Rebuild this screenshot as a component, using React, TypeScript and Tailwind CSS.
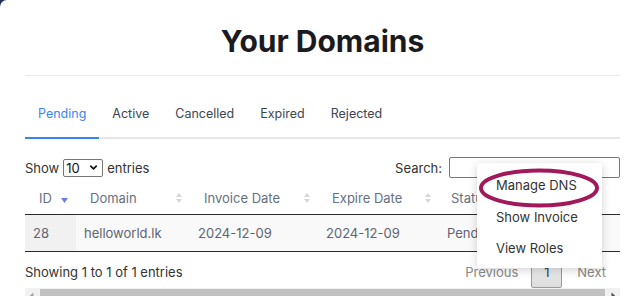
import { ChevronDown } from "lucide-react";

const TABS = ["Pending", "Active", "Cancelled", "Expired", "Rejected"];

const COLS = [
  { label: "ID", sort: "desc" },
  { label: "Domain", sort: "none" },
  { label: "Invoice Date", sort: "none" },
  { label: "Expire Date", sort: "none" },
  { label: "Status", sort: "none" },
];

const ROW = ["28", "helloworld.lk", "2024-12-09", "2024-12-09", "Pending"];

function SortIcon({ sort }: { sort: string }) {
  if (sort === "desc") {
    return (
      <svg width="7" height="5" viewBox="0 0 7 5" className="mt-[4px]">
        <path d="M0 0h7L3.5 5z" fill="#6f7be0" />
      </svg>
    );
  }
  return (
    <svg width="6" height="10" viewBox="0 0 6 10">
      <path d="M0 4L3 0l3 4z" fill="#d4d6da" />
      <path d="M0 6h6L3 10z" fill="#d4d6da" />
    </svg>
  );
}

export default function App() {
  return (
    <div className="relative w-[624px] h-[296px] overflow-hidden bg-[#1f3358] font-['Inter',sans-serif]">
      <div className="h-full bg-white rounded-tl-[7px] pl-[25px] pr-[4px]">
        <h1 className="pt-[23px] text-center text-[30px] leading-[36px] font-bold text-[#1b1b1f]">
          Your Domains
        </h1>
        <div className="mt-[16px] border-t border-[#e6e7ea]" />

        {/* Tabs */}
        <div className="mt-[13px] flex border-b-2 border-[#e6e7ea]">
          {TABS.map((t, i) => (
            <div
              key={t}
              className={`px-[13px] pt-[15px] pb-[13px] text-[12.5px] leading-[20px] border-b-2 -mb-[2px] ${
                i === 0 ? "border-[#3b82f6] text-[#3b82f6]" : "border-transparent text-[#3d4452]"
              }`}
            >
              {t}
            </div>
          ))}
        </div>

        {/* Length + search */}
        <div className="mt-[18px] flex items-center justify-between text-[13px] leading-[20px] text-[#333]">
          <div className="flex items-center">
            <span>Show</span>
            <span className="ml-[4px] flex items-center justify-between w-[40px] h-[18px] border border-[#767676] rounded-[2px] pl-[2px] pr-[3px] text-[#111]">
              10
              <ChevronDown size={11} strokeWidth={3.5} />
            </span>
            <span className="ml-[4px]">entries</span>
          </div>
          <div className="flex items-center">
            <span>Search:</span>
            <span className="ml-[7px] w-[171px] h-[21px] border border-[#767676] rounded-[2px]" />
          </div>
        </div>

        {/* Table */}
        <div className="mt-[4px] text-[13px] leading-[20px]">
          <div className="grid grid-cols-[51px_114px_128px_121px_1fr] h-[33px] items-center border-b border-[#2b2b2b] text-[#66707f]">
            {COLS.map((c, i) => (
              <div
                key={c.label}
                className={`flex items-center justify-between pr-[8px] ${i === 4 ? "pl-[12px]" : "pl-[14px]"}`}
              >
                <span>{c.label}</span>
                {i < 4 && <SortIcon sort={c.sort} />}
              </div>
            ))}
          </div>
          <div className="grid grid-cols-[51px_114px_128px_121px_1fr] h-[37px] items-stretch border-b border-[#2b2b2b] bg-[#f9f9f9] text-[#5e6470]">
            {ROW.map((v, i) => (
              <div key={i} className={`flex items-center pl-[8px] ${i === 0 ? "bg-[#f1f1f1]" : ""}`}>
                {v}
              </div>
            ))}
          </div>
        </div>

        {/* Info + pagination */}
        <div className="mt-[4px] flex items-center justify-between text-[13px] leading-[20px]">
          <span className="text-[#333]">Showing 1 to 1 of 1 entries</span>
          <div className="flex items-center text-[#8a8a8a]">
            <span>Previous</span>
            <span className="ml-[13px] flex items-center justify-center w-[31px] h-[32px] border border-[#9a9a9a] rounded-[2px] bg-gradient-to-b from-[#f4f4f4] to-[#dcdcdc] text-[#333]">
              1
            </span>
            <span className="ml-[15px] mr-[14px]">Next</span>
          </div>
        </div>

        {/* Horizontal scrollbar */}
        <div className="flex items-center h-[15px] bg-[#f1f1f1]">
          <svg width="15" height="15" viewBox="0 0 15 15">
            <path d="M5 7.5L8.5 4.5v6z" fill="#a3a3a3" />
          </svg>
          <div className="flex-1 h-[13px] bg-[#c1c1c1]" />
          <svg width="15" height="15" viewBox="0 0 15 15">
            <path d="M10 7.5L6.5 4.5v6z" fill="#505050" />
          </svg>
        </div>
      </div>

      {/* Action dropdown */}
      <div className="absolute left-[477px] top-[163px] w-[125px] h-[105px] bg-white rounded-[3px] shadow-[0_2px_10px_rgba(0,0,0,0.18)] pt-[12px] text-[13px] leading-[20px] text-[#333]">
        <div className="pl-[19px] h-[31px]">Manage DNS</div>
        <div className="pl-[19px] h-[31px] leading-[22px]">Show Invoice</div>
        <div className="pl-[19px] h-[31px] leading-[22px]">View Roles</div>
      </div>

      {/* Annotation ellipse */}
      <svg className="absolute left-[478px] top-[168px]" width="122" height="40" viewBox="0 0 122 40">
        <ellipse cx="61" cy="20" rx="58" ry="17.5" fill="none" stroke="#a2195b" strokeWidth="4" />
      </svg>
    </div>
  );
}
